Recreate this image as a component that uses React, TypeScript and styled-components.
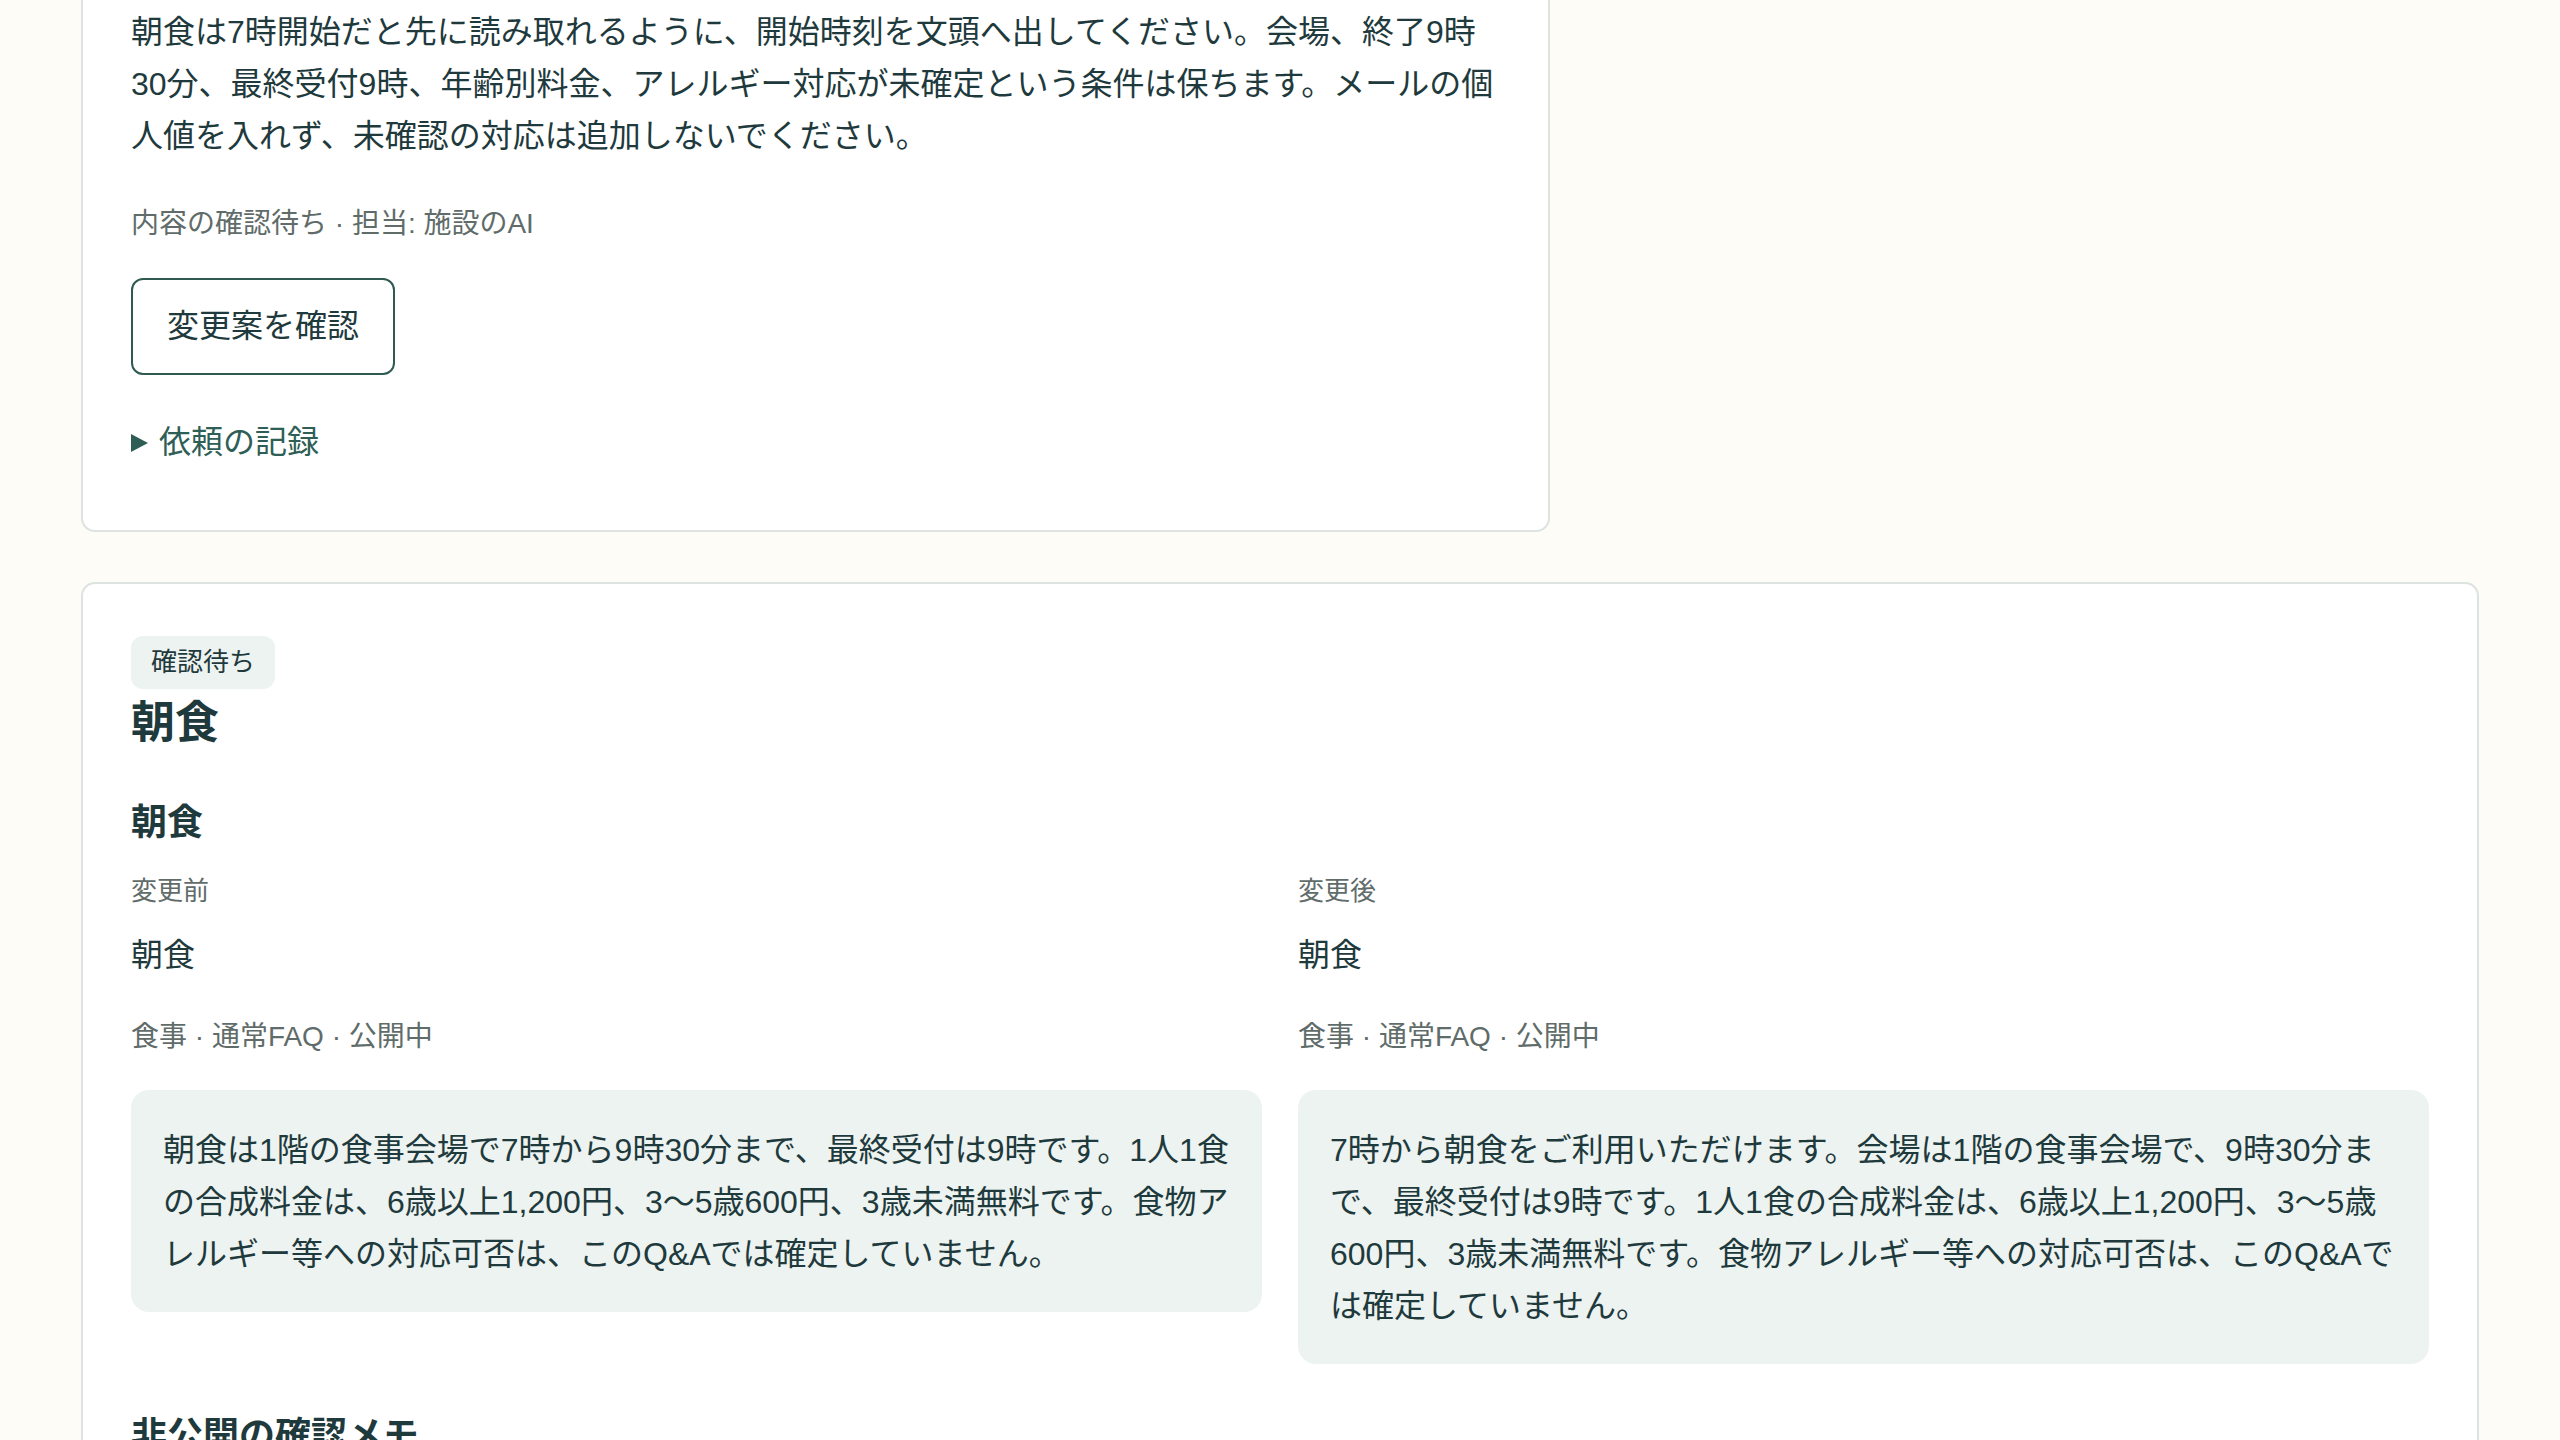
import React from "react";
import styled, { createGlobalStyle } from "styled-components";

const GlobalStyle = createGlobalStyle`
  html, body {
    margin: 0;
    padding: 0;
    background: #fdfcf7;
  }
  body {
    font-family: "Liberation Sans", Arial, "Noto Sans CJK JP", sans-serif;
    color: #1f3a3d;
    -webkit-font-smoothing: antialiased;
  }
  * {
    box-sizing: border-box;
  }
`;

// the page is shown scrolled a little way down, so the first card starts above the fold
const Page = styled.main`
  display: flex;
  flex-direction: column;
  align-items: flex-start;
  gap: 50px;
  padding: 0 81px 80px;
  margin-top: -44px;
`;

const Card = styled.section<{ $wide?: boolean }>`
  width: ${(p) => (p.$wide ? "100%" : "1469px")};
  background: #ffffff;
  border: 2px solid #dce3e0;
  border-radius: 14px;
  padding: 48px;
  display: flex;
  flex-direction: column;
  align-items: flex-start;
`;

const Body = styled.p`
  margin: 0;
  font-size: 32px;
  line-height: 52px;
  color: #1f3a3d;
`;

const Meta = styled.div<{ $gap?: number }>`
  margin-top: ${(p) => p.$gap ?? 0}px;
  font-size: 28px;
  line-height: 44.8px;
  color: #5f6c6a;
`;

const OutlineButton = styled.button`
  margin-top: 31px;
  font-family: inherit;
  font-size: 32px;
  line-height: 52px;
  color: #1f3a3d;
  background: #ffffff;
  border: 2px solid #2e5a52;
  border-radius: 12px;
  padding: 20px 34px 21px;
  cursor: pointer;
`;

const Log = styled.details`
  margin-top: 41px;
  margin-bottom: 14px;
`;

const LogSummary = styled.summary`
  display: flex;
  align-items: center;
  gap: 11px;
  list-style: none;
  font-size: 32px;
  line-height: 52px;
  color: #2e5e55;
  cursor: pointer;

  &::-webkit-details-marker {
    display: none;
  }

  &::before {
    content: "";
    width: 0;
    height: 0;
    border-top: 9.5px solid transparent;
    border-bottom: 9.5px solid transparent;
    border-left: 17px solid #2e5e55;
    margin-top: 2px;
  }
`;

const Badge = styled.span`
  display: inline-block;
  margin-top: 4px;
  font-size: 26px;
  line-height: 41.6px;
  padding: 6px 20px;
  border-radius: 12px;
  background: #edf3f0;
  color: #1f3a3d;
`;

const Title = styled.h2`
  margin: 5px 0 0;
  font-size: 44px;
  line-height: 57px;
  font-weight: 700;
  color: #1f3a3d;
`;

const SectionTitle = styled.h3<{ $gap: number }>`
  margin: ${(p) => p.$gap}px 0 0;
  font-size: 36px;
  line-height: 50px;
  font-weight: 700;
  color: #1f3a3d;
`;

const Compare = styled.div`
  width: 100%;
  margin-top: 23px;
  display: grid;
  grid-template-columns: 1fr 1fr;
  column-gap: 36px;
  align-items: start;
`;

const Column = styled.div`
  display: flex;
  flex-direction: column;
  min-width: 0;
`;

const Label = styled.div`
  font-size: 26px;
  line-height: 41.6px;
  color: #5f6c6a;
`;

const Value = styled.div`
  margin-top: 16px;
  font-size: 32px;
  line-height: 52px;
  color: #1f3a3d;
`;

const AnswerBox = styled.div`
  margin-top: 30px;
  background: #edf3f0;
  border-radius: 18px;
  padding: 34px 32px 32px;
  font-size: 32px;
  line-height: 52px;
  color: #1f3a3d;
`;

type Side = {
  label: string;
  question: string;
  meta: string;
  answer: string;
};

const sides: Side[] = [
  {
    label: "変更前",
    question: "朝食",
    meta: "食事 · 通常FAQ · 公開中",
    answer:
      "朝食は1階の食事会場で7時から9時30分まで、最終受付は9時です。1人1食の合成料金は、6歳以上1,200円、3〜5歳600円、3歳未満無料です。食物アレルギー等への対応可否は、このQ&Aでは確定していません。",
  },
  {
    label: "変更後",
    question: "朝食",
    meta: "食事 · 通常FAQ · 公開中",
    answer:
      "7時から朝食をご利用いただけます。会場は1階の食事会場で、9時30分まで、最終受付は9時です。1人1食の合成料金は、6歳以上1,200円、3〜5歳600円、3歳未満無料です。食物アレルギー等への対応可否は、このQ&Aでは確定していません。",
  },
];

export default function App() {
  return (
    <>
      <GlobalStyle />
      <Page lang="ja">
        <Card>
          <Body>
            朝食は7時開始だと先に読み取れるように、開始時刻を文頭へ出してください。会場、終了9時30分、最終受付9時、年齢別料金、アレルギー対応が未確定という条件は保ちます。メールの個人値を入れず、未確認の対応は追加しないでください。
          </Body>
          <Meta $gap={40}>内容の確認待ち · 担当: 施設のAI</Meta>
          <OutlineButton type="button">変更案を確認</OutlineButton>
          <Log>
            <LogSummary>依頼の記録</LogSummary>
          </Log>
        </Card>

        <Card $wide>
          <Badge>確認待ち</Badge>
          <Title>朝食</Title>
          <SectionTitle $gap={47}>朝食</SectionTitle>
          <Compare>
            {sides.map((s) => (
              <Column key={s.label}>
                <Label>{s.label}</Label>
                <Value>{s.question}</Value>
                <Meta $gap={34}>{s.meta}</Meta>
                <AnswerBox>{s.answer}</AnswerBox>
              </Column>
            ))}
          </Compare>
          <SectionTitle $gap={47}>非公開の確認メモ</SectionTitle>
        </Card>
      </Page>
    </>
  );
}
